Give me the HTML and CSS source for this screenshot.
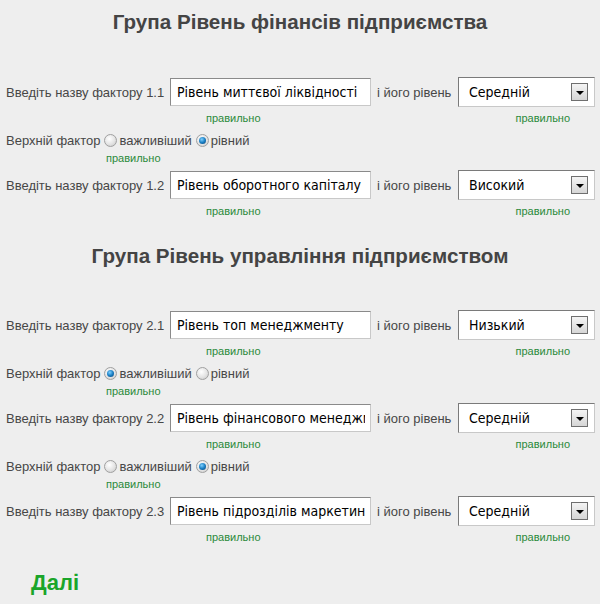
FILE: index.html
```html
<!DOCTYPE html>
<html lang="uk">
<head>
<meta charset="utf-8">
<link rel="stylesheet" href="styles.css">
</head>
<body>
<div class="page">
  <section class="group">
    <h2 class="group-title">Група Рівень фінансів підприємства</h2>
    <div class="field-row">
      <span class="label">Введіть назву фактору 1.1</span>
      <div class="input"><span class="input-text">Рівень миттєвої ліквідності</span></div>
      <span class="label mid">і його рівень</span>
      <div class="select"><span class="select-text">Середній</span><span class="select-btn"><span class="tri"></span></span></div>
    </div>
    <div class="hint-row"><span class="hint h-input">правильно</span><span class="hint h-select">правильно</span></div>
    <div class="radio-block">
      <div class="radio-row">
        <span class="label">Верхній фактор</span>
        <span class="radio"></span><span class="label">важливіший</span>
        <span class="radio checked"></span><span class="label">рівний</span>
      </div>
      <div class="hint-row"><span class="hint h-radio">правильно</span></div>
    </div>
    <div class="field-row">
      <span class="label">Введіть назву фактору 1.2</span>
      <div class="input"><span class="input-text">Рівень оборотного капіталу</span></div>
      <span class="label mid">і його рівень</span>
      <div class="select"><span class="select-text">Високий</span><span class="select-btn"><span class="tri"></span></span></div>
    </div>
    <div class="hint-row"><span class="hint h-input">правильно</span><span class="hint h-select">правильно</span></div>
  </section>

  <section class="group">
    <h2 class="group-title">Група Рівень управління підприємством</h2>
    <div class="field-row">
      <span class="label">Введіть назву фактору 2.1</span>
      <div class="input"><span class="input-text">Рівень топ менеджменту</span></div>
      <span class="label mid">і його рівень</span>
      <div class="select"><span class="select-text">Низький</span><span class="select-btn"><span class="tri"></span></span></div>
    </div>
    <div class="hint-row"><span class="hint h-input">правильно</span><span class="hint h-select">правильно</span></div>
    <div class="radio-block">
      <div class="radio-row">
        <span class="label">Верхній фактор</span>
        <span class="radio checked"></span><span class="label">важливіший</span>
        <span class="radio"></span><span class="label">рівний</span>
      </div>
      <div class="hint-row"><span class="hint h-radio">правильно</span></div>
    </div>
    <div class="field-row">
      <span class="label">Введіть назву фактору 2.2</span>
      <div class="input"><span class="input-text">Рівень фінансового менеджменту</span></div>
      <span class="label mid">і його рівень</span>
      <div class="select"><span class="select-text">Середній</span><span class="select-btn"><span class="tri"></span></span></div>
    </div>
    <div class="hint-row"><span class="hint h-input">правильно</span><span class="hint h-select">правильно</span></div>
    <div class="radio-block">
      <div class="radio-row">
        <span class="label">Верхній фактор</span>
        <span class="radio"></span><span class="label">важливіший</span>
        <span class="radio checked"></span><span class="label">рівний</span>
      </div>
      <div class="hint-row"><span class="hint h-radio">правильно</span></div>
    </div>
    <div class="field-row">
      <span class="label">Введіть назву фактору 2.3</span>
      <div class="input"><span class="input-text">Рівень підрозділів маркетингу</span></div>
      <span class="label mid">і його рівень</span>
      <div class="select"><span class="select-text">Середній</span><span class="select-btn"><span class="tri"></span></span></div>
    </div>
    <div class="hint-row"><span class="hint h-input">правильно</span><span class="hint h-select">правильно</span></div>
  </section>

  <div class="next">Далі</div>
</div>
</body>
</html>
```

FILE: styles.css
```css
html, body {
  margin: 0;
  padding: 0;
  background: #eeeeee;
}
.page {
  width: 600px;
  height: 604px;
  overflow: hidden;
  font-family: "Liberation Sans", Arial, sans-serif;
  color: #474747;
}
.group-title {
  margin: 10px 0 43px;
  height: 24px;
  line-height: 24px;
  text-align: center;
  font-size: 20.6px;
  font-weight: bold;
  color: #444444;
}
.group + .group .group-title {
  margin-top: 26px;
  margin-bottom: 42px;
}
.field-row {
  display: grid;
  grid-template-columns: 164px 201px 87px 137px;
  align-items: center;
  height: 30px;
  padding-left: 6px;
}
.label {
  font-size: 13px;
  white-space: nowrap;
  color: #474747;
}
.label.mid {
  padding-left: 6px;
}
.input {
  height: 28px;
  box-sizing: border-box;
  background: #fff;
  border: 1px solid #c8c8c8;
  border-top-color: #8a8a8a;
  border-left-color: #8a8a8a;
  display: flex;
  align-items: center;
  padding: 0 5px 0 6px;
  min-width: 0;
}
.input-text {
  flex: 1;
  min-width: 0;
  overflow: hidden;
}
.input-text, .select-text {
  font-family: "DejaVu Sans Condensed", "DejaVu Sans", sans-serif;
  font-size: 14px;
  color: #000;
  white-space: nowrap;
}
.select {
  height: 30px;
  box-sizing: border-box;
  background: #fff;
  border: 1px solid #c8c8c8;
  border-top-color: #7a7a7a;
  border-left-color: #7a7a7a;
  display: flex;
  align-items: center;
  justify-content: space-between;
  padding: 0 6px 0 10px;
}
.select-btn {
  width: 17px;
  height: 18px;
  box-sizing: border-box;
  border: 1px solid #6f6f6f;
  background: linear-gradient(#f4f4f4, #d6d6d6);
  display: flex;
  align-items: center;
  justify-content: center;
}
.tri {
  width: 0;
  height: 0;
  border-left: 4px solid transparent;
  border-right: 4px solid transparent;
  border-top: 4px solid #000;
  margin-top: 1px;
}
.hint-row {
  display: flex;
  height: 14px;
  line-height: 14px;
  margin-top: 4px;
}
.hint {
  font-family: "Liberation Sans", Arial, sans-serif;
  font-size: 11px;
  color: #2a8a3a;
  white-space: nowrap;
}
.h-input { margin-left: 206px; }
.h-select { margin-left: 255px; }
.h-radio { margin-left: 106px; }
.radio-block {
  margin-top: 6px;
  margin-bottom: 5px;
}
.radio-block .hint-row {
  margin-top: 2px;
}
.radio-row {
  display: flex;
  align-items: center;
  height: 18px;
  padding-left: 6px;
}
.radio {
  width: 13px;
  height: 13px;
  box-sizing: border-box;
  border-radius: 50%;
  border: 1px solid #a0a0a0;
  background: radial-gradient(circle at 40% 35%, #ffffff 0, #e4e4e4 55%, #c4c4c4 100%);
  margin: 0 2px 0 4px;
  position: relative;
}
.radio.checked::after {
  content: "";
  position: absolute;
  left: 2px;
  top: 2px;
  width: 7px;
  height: 7px;
  border-radius: 50%;
  background: radial-gradient(circle at 40% 35%, #7fd0ff 0, #1a7fc4 50%, #0a3f70 100%);
}
.next {
  margin: 27px 0 0 31px;
  font-size: 22px;
  font-weight: bold;
  color: #1aa52a;
  line-height: 24px;
}
```
